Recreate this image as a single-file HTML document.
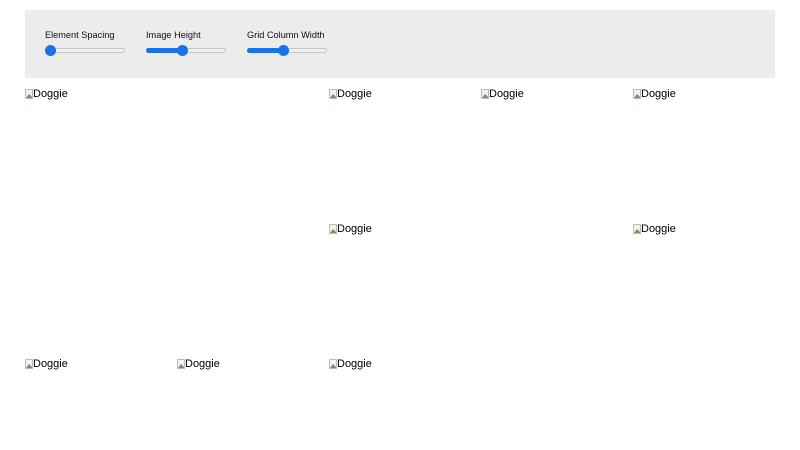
<!DOCTYPE html>
<html><head><style>
*{margin:0;padding:0;box-sizing:border-box}
body{width:800px;height:450px;background:#fff;font-family:"Liberation Sans",sans-serif;position:relative;overflow:hidden}
.panel{position:absolute;left:25px;top:10px;width:750px;height:68px;background:#ececec}
.lab{position:absolute;top:30px;font-size:9.2px;color:#111}
.track{position:absolute;top:48px;width:80px;height:5px;border-radius:3px;background:#efefef;border:1px solid #c4c4c4}
.fill{position:absolute;left:-1px;top:-1px;height:5px;border-radius:3px;background:#1a73e8}
.thumb{position:absolute;top:-4px;width:11px;height:11px;border-radius:50%;background:#1a73e8}
.img{position:absolute;font-size:11px;color:#000;height:14px;line-height:14px}
.img svg{position:absolute;left:0;top:2px}
.img span{position:absolute;left:8px;top:0;white-space:nowrap}
</style></head><body>
<div class="panel"></div>
<div class="lab" style="left:45px">Element Spacing</div>
<div class="lab" style="left:146px">Image Height</div>
<div class="lab" style="left:247px">Grid Column Width</div>
<div class="track" style="left:45px"><div class="thumb" style="left:-1px"></div></div>
<div class="track" style="left:146px"><div class="fill" style="width:37px"></div><div class="thumb" style="left:30px"></div></div>
<div class="track" style="left:247px"><div class="fill" style="width:37px"></div><div class="thumb" style="left:30px"></div></div>

<div class="img" style="left:25px;top:87px"><svg width="8" height="10"><rect x="0.5" y="0.5" width="7" height="9" fill="#eef3ee" stroke="#bbb"/><path d="M1 9 L4 5 L7 8 V9Z" fill="#6a9a5a"/></svg><span>Doggie</span></div>
<div class="img" style="left:329px;top:87px"><svg width="8" height="10"><rect x="0.5" y="0.5" width="7" height="9" fill="#eef3ee" stroke="#bbb"/><path d="M1 9 L4 5 L7 8 V9Z" fill="#6a9a5a"/></svg><span>Doggie</span></div>
<div class="img" style="left:481px;top:87px"><svg width="8" height="10"><rect x="0.5" y="0.5" width="7" height="9" fill="#eef3ee" stroke="#bbb"/><path d="M1 9 L4 5 L7 8 V9Z" fill="#6a9a5a"/></svg><span>Doggie</span></div>
<div class="img" style="left:633px;top:87px"><svg width="8" height="10"><rect x="0.5" y="0.5" width="7" height="9" fill="#eef3ee" stroke="#bbb"/><path d="M1 9 L4 5 L7 8 V9Z" fill="#6a9a5a"/></svg><span>Doggie</span></div>
<div class="img" style="left:329px;top:222px"><svg width="8" height="10"><rect x="0.5" y="0.5" width="7" height="9" fill="#eef3ee" stroke="#bbb"/><path d="M1 9 L4 5 L7 8 V9Z" fill="#6a9a5a"/></svg><span>Doggie</span></div>
<div class="img" style="left:633px;top:222px"><svg width="8" height="10"><rect x="0.5" y="0.5" width="7" height="9" fill="#eef3ee" stroke="#bbb"/><path d="M1 9 L4 5 L7 8 V9Z" fill="#6a9a5a"/></svg><span>Doggie</span></div>
<div class="img" style="left:25px;top:357px"><svg width="8" height="10"><rect x="0.5" y="0.5" width="7" height="9" fill="#eef3ee" stroke="#bbb"/><path d="M1 9 L4 5 L7 8 V9Z" fill="#6a9a5a"/></svg><span>Doggie</span></div>
<div class="img" style="left:177px;top:357px"><svg width="8" height="10"><rect x="0.5" y="0.5" width="7" height="9" fill="#eef3ee" stroke="#bbb"/><path d="M1 9 L4 5 L7 8 V9Z" fill="#6a9a5a"/></svg><span>Doggie</span></div>
<div class="img" style="left:329px;top:357px"><svg width="8" height="10"><rect x="0.5" y="0.5" width="7" height="9" fill="#eef3ee" stroke="#bbb"/><path d="M1 9 L4 5 L7 8 V9Z" fill="#6a9a5a"/></svg><span>Doggie</span></div>
</body></html>
